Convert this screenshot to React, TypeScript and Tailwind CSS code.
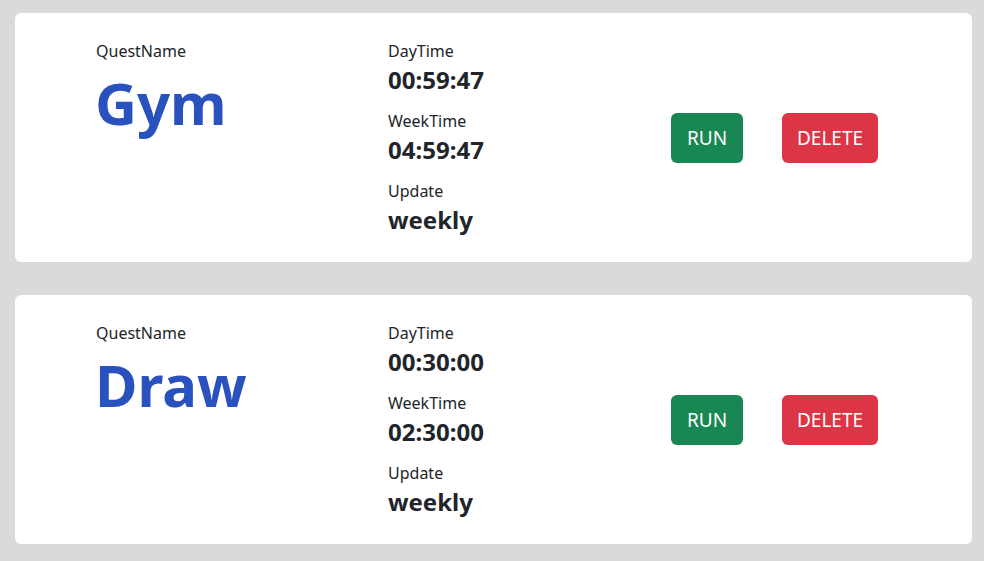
const quests = [
  { name: "Gym", day: "00:59:47", week: "04:59:47", update: "weekly" },
  { name: "Draw", day: "00:30:00", week: "02:30:00", update: "weekly" },
];

function QuestCard({ q }: { q: (typeof quests)[number] }) {
  return (
    <div className="bg-white rounded-md flex items-center pl-[81px] pt-[26px] pb-[25px]">
      <div className="w-[292px] self-start">
        <p className="text-[16px] leading-6 text-[#212529]">QuestName</p>
        <h1 className="text-[58px] leading-[1.2] font-bold text-[#2a52be] -ml-[1px] mt-[5px]">{q.name}</h1>
      </div>
      <div className="w-[283px] text-[#212529]">
        <p className="text-[16px] leading-6">DayTime</p>
        <p className="text-[24px] leading-[34px] font-bold mb-[12px]">{q.day}</p>
        <p className="text-[16px] leading-6">WeekTime</p>
        <p className="text-[24px] leading-[34px] font-bold mb-[12px]">{q.week}</p>
        <p className="text-[16px] leading-6">Update</p>
        <p className="text-[24px] leading-[34px] font-bold">{q.update}</p>
      </div>
      <button className="h-[50px] w-[72px] rounded-md bg-[#198754] text-white text-[19px]">RUN</button>
      <button className="h-[50px] w-[96px] ml-[39px] rounded-md bg-[#dc3545] text-white text-[19px]">DELETE</button>
    </div>
  );
}

export default function App() {
  return (
    <div
      className="min-h-screen bg-[#dadada] px-[15px] pt-[13px] pb-[16px] flex flex-col gap-[33px] w-[987px]"
      style={{ fontFamily: '"Noto Sans", "Open Sans", sans-serif' }}
    >
      {quests.map((q) => (
        <QuestCard key={q.name} q={q} />
      ))}
    </div>
  );
}
